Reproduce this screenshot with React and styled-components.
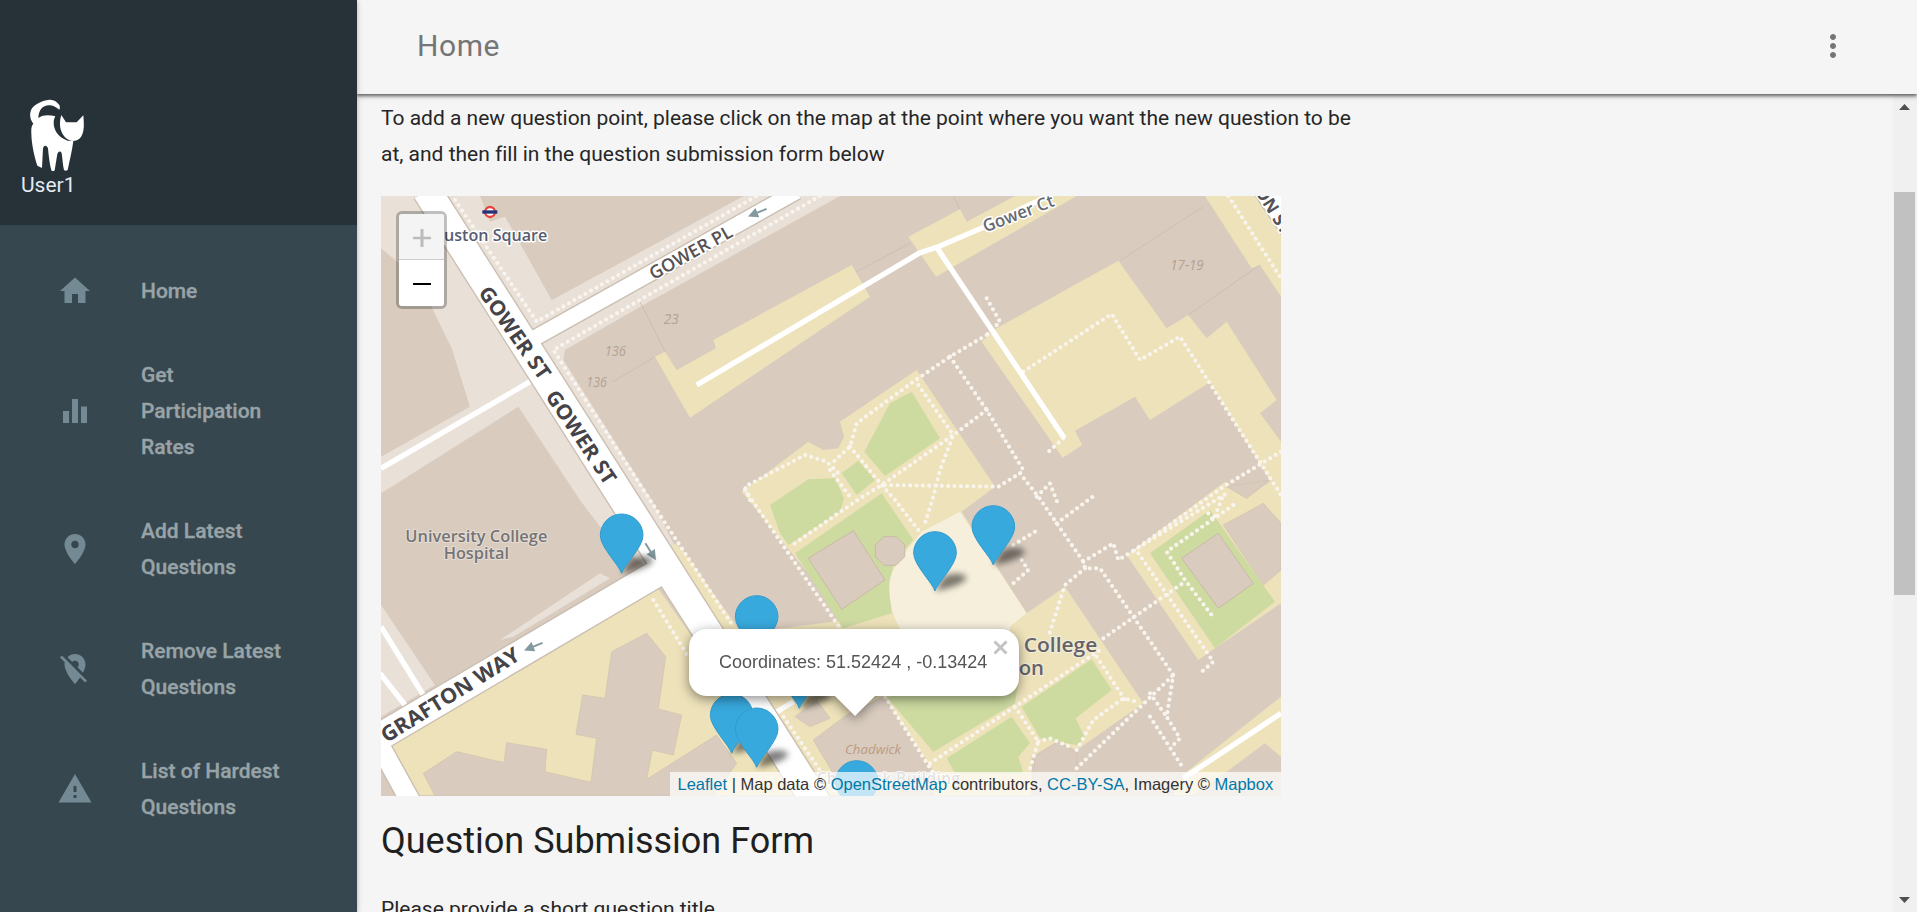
import React from "react";
import styled, { createGlobalStyle } from "styled-components";

const GlobalStyle = createGlobalStyle`
  html, body { margin: 0; height: 100%; overflow: hidden; }
  body { font-family: Roboto, "Liberation Sans", sans-serif; font-size: 21px; line-height: 36px; background: #f5f5f5; }
  * { box-sizing: border-box; }
`;

const Layout = styled.div`
  display: flex;
  width: 100%;
  height: 912px;
  overflow: hidden;
  background: #f5f5f5;
`;

const Drawer = styled.aside`
  flex: 0 0 357px;
  height: 100%;
  background: #37474f;
  box-shadow: 0 3px 3px rgba(0, 0, 0, 0.1), 0 1px 6px rgba(0, 0, 0, 0.22);
  z-index: 5;
`;

const DrawerHeader = styled.header`
  display: flex;
  flex-direction: column;
  justify-content: flex-end;
  height: 225px;
  padding: 0 21px 21px;
  background: #263238;
`;

const Avatar = styled.svg`
  width: 54px;
  height: 72px;
  margin-left: 9px;
  fill: #fff;
`;

const UserName = styled.span`
  margin-top: -4px;
  line-height: 37px;
  font-size: 21px;
  color: #e3eaf2;
`;

const Nav = styled.nav`
  display: flex;
  flex-direction: column;
  padding-top: 24px;
`;

const NavItem = styled.a`
  display: flex;
  align-items: center;
  gap: 48px;
  padding: 24px 57px;
  color: #98a3a7;
  font-weight: 500;
`;

const Glyph = styled.svg`
  flex: none;
  width: 36px;
  height: 36px;
  fill: ${(p) => p.$color || "#738994"};
`;

const NavLabel = styled.span`
  white-space: pre-line;
  font-size: 21px;
  -webkit-text-stroke: 0.35px currentColor;
`;

const Main = styled.div`
  flex: 1;
  min-width: 0;
  display: flex;
  flex-direction: column;
`;

const TopBar = styled.header`
  flex: 0 0 94px;
  display: flex;
  align-items: center;
  justify-content: space-between;
  padding: 0 66px 2px 60px;
  background: #f5f5f5;
  box-shadow: 0 2px 3px rgba(0, 0, 0, 0.5), 0 2px 6px rgba(0, 0, 0, 0.2);
  z-index: 3;
`;

const PageTitle = styled.span`
  font-size: 30px;
  letter-spacing: 0.6px;
  color: #757575;
`;

const Body = styled.div`
  flex: 1;
  min-height: 0;
  display: flex;
`;

const Content = styled.main`
  flex: 1;
  min-width: 0;
  overflow: hidden;
  padding: 6px 24px 0;
  color: #262626;
`;

const Paragraph = styled.p`
  margin: 0;
  width: 1000px;
  white-space: pre-line;
  letter-spacing: -0.01px;
`;

const Heading = styled.h4`
  margin: 21px 0 25.5px;
  font-size: 36px;
  line-height: 48px;
  font-weight: 400;
  color: #1f1f1f;
`;

const ScrollTrack = styled.div`
  flex: 0 0 24px;
  display: flex;
  flex-direction: column;
  align-items: center;
  justify-content: space-between;
  padding: 10px 1px 9px 0;
  background: #f0f0f0;
`;

const ScrollThumb = styled.div`
  width: 21px;
  height: 403px;
  margin: 82px 0 auto;
  background: #c1c1c1;
`;

const Arrow = styled.svg`
  width: 11px;
  height: 6px;
  fill: #505050;
`;

const MapFrame = styled.section`
  position: relative;
  width: 900px;
  height: 600px;
  margin-top: 24px;
  overflow: hidden;
  font-family: "Liberation Sans", Arial, sans-serif;
`;

const MapCanvas = styled.svg`
  display: block;
  width: 900px;
  height: 600px;
  font-family: "Open Sans", "Noto Sans", sans-serif;
`;

const ZoomControl = styled.div`
  position: absolute;
  left: 15px;
  top: 15px;
  width: 51px;
  border: 3px solid rgba(0, 0, 0, 0.25);
  border-radius: 6px;
  background-clip: padding-box;
`;

const ZoomButton = styled.div`
  display: flex;
  align-items: center;
  justify-content: center;
  height: 46px;
  padding-top: 2px;
  background: ${(p) => (p.$disabled ? "#f4f4f4" : "#fff")};
  border-bottom: ${(p) => (p.$disabled ? "1.5px solid #ccc" : "0")};
  border-radius: ${(p) => (p.$disabled ? "3px 3px 0 0" : "0 0 3px 3px")};
  & svg { width: 18px; height: 18px; fill: ${(p) => (p.$disabled ? "#bbb" : "#000")}; }
`;

const Popup = styled.div`
  position: absolute;
  left: 308px;
  top: 432.5px;
  width: 330px;
  height: 67px;
  filter: drop-shadow(0 3px 6px rgba(0, 0, 0, 0.45));
`;

const PopupBody = styled.div`
  display: flex;
  align-items: center;
  height: 100%;
  padding: 0 30px;
  border-radius: 18px;
  background: #fff;
  color: #555;
  font-size: 18px;
  line-height: 26px;
  white-space: nowrap;
`;

const PopupTip = styled.svg`
  position: absolute;
  left: 145px;
  top: 66px;
  width: 42px;
  height: 21px;
  fill: #fff;
`;

const PopupClose = styled.svg`
  position: absolute;
  right: 11px;
  top: 11px;
  width: 15px;
  height: 15px;
  stroke: #c3c3c3;
  stroke-width: 3;
`;

const Attribution = styled.div`
  position: absolute;
  right: 0;
  bottom: 0;
  height: 24px;
  width: 611px;
  padding: 0 7.5px;
  background: rgba(255, 255, 255, 0.7);
  font-size: 16.5px;
  line-height: 24px;
  color: #333;
  white-space: nowrap;
  & a { color: #0078a8; }
`;

const PATHS = {
  home: "M10 20v-6h4v6h5v-8h3L12 3 2 12h3v8z",
  bars: "M10 20h4V4h-4v16zm-6 0h4v-8H4v8zM16 9v11h4V9h-4z",
  place:
    "M12 2C8.13 2 5 5.13 5 9c0 5.25 7 13 7 13s7-7.75 7-13c0-3.87-3.13-7-7-7zm0 9.5c-1.38 0-2.5-1.12-2.5-2.5s1.12-2.5 2.5-2.5 2.5 1.12 2.5 2.5-1.12 2.5-2.5 2.5z",
  placeOff:
    "M12 6.5c1.38 0 2.5 1.12 2.5 2.5 0 .74-.33 1.39-.83 1.85l3.63 3.63c.98-1.86 1.7-3.8 1.7-5.48 0-3.87-3.13-7-7-7-1.98 0-3.76.83-5.04 2.15l3.19 3.19c.46-.52 1.11-.84 1.85-.84zm4.37 9.6l-4.63-4.63-.11-.11L3.27 3 2 4.27l3.18 3.18C5.07 7.95 5 8.47 5 9c0 5.25 7 13 7 13s1.67-1.85 3.38-4.35L18.73 21 20 19.73l-3.63-3.63z",
  warning: "M1 21h22L12 2 1 21zm12-3h-2v-2h2v2zm0-4h-2v-4h2v4z",
  more: "M12 8c1.1 0 2-.9 2-2s-.9-2-2-2-2 .9-2 2 .9 2 2 2zm0 2c-1.1 0-2 .9-2 2s.9 2 2 2 2-.9 2-2-.9-2-2-2zm0 6c-1.1 0-2 .9-2 2s.9 2 2 2 2-.9 2-2-.9-2-2-2z",
};

const NAV_ITEMS = [
  { icon: "home", label: "Home" },
  { icon: "bars", label: "Get\nParticipation\nRates" },
  { icon: "place", label: "Add Latest\nQuestions" },
  { icon: "placeOff", label: "Remove Latest\nQuestions" },
  { icon: "warning", label: "List of Hardest\nQuestions" },
];

// Map geometry, in thirds of a pixel.
const LIGHT = [
  "3,18 420,18 515,330 1090,18 1380,18 790,345 555,480 550,510 815,930 880,1060 800,1130 690,1050 600,930 415,650 3,910 3,800 270,650 215,475 140,320 60,222 3,175",
  "3,1245 165,1485 3,1580",
  "660,1150 690,1165 400,1340 360,1350",
];
const BUILDING_OVER_LIGHT = ["300,18 330,95 375,80 515,330 1090,18"];
const YELLOW = [
  "22,1675 835,1197 1270,1815 115,1815",
  "880,1060 905,1075 1085,1330 1400,1290 1085,905 1285,755 1330,780 1375,775 1392,740 1380,695 1610,540 1845,890 1745,965 1940,1270 2055,1190 2290,1540 2090,1680 2030,1655 1955,1700 1955,1815 1340,1815 860,1080",
  "825,500 855,485 890,540 1008,475 1000,450 1415,225 1470,320 930,683",
  "1585,140 1740,58 1760,95 1905,18 2090,18 1668,260",
  "1850,415 2215,212 2360,415 2425,375 2480,445 2540,395 2690,630 2640,670 2703,755 2703,925 2490,577 2310,690 2265,620 2085,722 2107,765 2048,803 1805,455",
  "2475,18 2640,18 2703,110 2703,320 2640,225 2615,235",
  "2240,1095 2535,875 2600,925 2703,850 2703,1240 2505,1375 2455,1410",
  "2380,1815 2420,1745 2703,1520 2703,1700 2655,1660 2540,1745 2440,1815",
];
const BUILDINGS = [
  "165,1818 130,1750 230,1685 372,1718 380,1658 500,1678 495,1745 633,1777 650,1645 588,1633 608,1515 675,1525 695,1385 800,1330 857,1400 835,1557 905,1575 880,1695 817,1680 800,1768 1010,1635 1070,1720 1000,1818",
  "1245,1580 1310,1530 1350,1585 1290,1610",
  "1300,1650 1400,1575 1510,1520 1660,1745 1660,1818 1400,1818",
  "1965,1700 2035,1655 2090,1690 2090,1818 1955,1818",
  "2530,1005 2650,940 2703,1000 2703,1140 2650,1185",
  "2540,890 2665,870 2600,925",
];
const CREAM = "M1740 965L1940 1270L1895 1305L1880 1340L1570 1340L1552 1300C1530 1260 1525 1200 1530 1170C1535 1130 1580 1080 1625 1025Z";
const GREEN = [
  "1530,640 1595,605 1680,745 1515,858 1453,785",
  "1385,850 1435,812 1485,870 1430,915",
  "1170,945 1285,868 1365,865 1392,925 1380,965 1225,1065 1200,1030",
  "1245,1090 1505,910 1600,1050 1545,1110 1528,1180 1535,1270 1390,1315",
  "2310,1090 2490,960 2685,1235 2505,1375",
  "1520,1520 1915,1480 1905,1540 1660,1685",
  "1925,1550 2135,1408 2195,1500 2087,1585 2115,1645 2090,1665 1980,1645",
  "1700,1705 1895,1580 1950,1660 1915,1700 1930,1750 1725,1750",
];
const OUTLINED = [
  "1285,1105 1420,1022 1515,1170 1385,1258",
  "1512,1040 1548,1040 1574,1064 1574,1100 1548,1126 1512,1126 1486,1100 1486,1064",
  "2405,1105 2515,1030 2620,1180 2515,1255",
];
const BOUNDARIES = [
  "780,335 855,485", "700,575 825,500", "2220,212 2470,50", "2425,375 2640,225",
  "1720,18 1740,58", "1430,245 1590,160",
];
const FOOTPATHS = [
  "225,30 470,395 1130,18",
  "1320,18 520,480 810,930 1060,1310",
  "1200,1565 1370,1815",
  "820,1230 925,1400",
  "1110,930 1095,890 1275,795 1340,815 1375,850",
  "1095,900 1370,1300 1500,1500",
  "1820,435 1710,500 1600,575 1430,700 1410,770 1350,825",
  "1410,770 1505,885 1545,930 1615,1020",
  "1710,500 1820,660 1930,840 1920,850 1855,890 1505,885",
  "1920,850 1975,920 2110,1115 2115,1135 2160,1135 2380,1455 2360,1580 2400,1645 2370,1675",
  "1615,585 1720,735 1505,885 1440,925 1230,1070",
  "1820,660 1720,735 1680,840 1660,920 1635,1000",
  "1350,840 1410,920",
  "1820,325 1860,395 1820,435",
  "1930,545 2195,372 2280,510 2400,440 2703,915",
  "2050,745 1995,795", "2703,785 2530,890 2250,1090",
  "2545,18 2703,265",
  "2110,1115 2200,1060 2215,1110 2540,910",
  "2115,1135 2055,1185 2005,1340",
  "2030,1000 2145,915", "1970,920 2010,880 2035,945",
  "1900,1065 1965,1025", "1925,1110 1945,1140 1900,1180",
  "2170,1345 2415,1175", "2275,1090 2500,1415 2460,1450",
  "2560,945 2360,1085 2415,1170 2495,1275",
  "2485,970 2500,990 2530,915",
  "2090,1735 2380,1455", "2150,1400 2235,1530",
  "2090,1680 2140,1590 2230,1525 2270,1535",
  "1650,1720 1905,1550 2160,1380",
  "1905,1550 1975,1655 1950,1735",
  "1975,1655 2010,1645 2080,1675",
  "1515,1520 1660,1750",
  "2310,1510 2360,1580", "2310,1580 2410,1735",
];
const SERVICE = [
  "3,835 450,575",
  "950,585 1620,188 1670,172 1810,112 2020,10",
  "1670,172 2053,745",
  "2410,1765 2703,1570",
  "3,1310 130,1515",
  "0,1450 75,1545",
  "1190,1565 1240,1535",
];
const ROADS = [
  { d: "140,2 1315,1847", w: 85 },
  { d: "450,452 1250,4", w: 46 },
  { d: "-60,1675 870,1127", w: 80 },
  { d: "-10,1650 95,1840", w: 58 },
  { d: "2640,-30 2760,150", w: 72 },
];
const MARKERS = [
  [725, 1150], [1840, 1125], [1665, 1203], [1130, 1395], [1258, 1555], [1055, 1690], [1130, 1732], [1430, 1890],
];
const ARROWS = [
  [1132, 68, 158], [460, 1370, 158], [812, 1085, 58],
];
const STREET_NAMES = [
  { x: 405, y: 428, a: 55, w: 325, s: 62, t: "GOWER ST", weight: 700, c: "#454347" },
  { x: 604, y: 741, a: 56, w: 325, s: 62, t: "GOWER ST", weight: 700, c: "#454347" },
  { x: 932, y: 187, a: -29, w: 276, s: 54, t: "GOWER PL", weight: 600, c: "#555154" },
  { x: 210, y: 1514, a: -32, w: 478, s: 63, t: "GRAFTON WAY", weight: 700, c: "#454347" },
  { x: 1915, y: 70, a: -21, w: 225, s: 52, t: "Gower Ct", weight: 600, c: "#666a72" },
  { x: 2681, y: 60, a: 58, s: 52, t: "ON ST", weight: 700, c: "#555154" },
];

const Polys = ({ list, ...rest }) => list.map((points) => <polygon key={points} points={points} {...rest} />);
const Lines = ({ list, ...rest }) => list.map((points) => <polyline key={points} points={points} fill="none" {...rest} />);

function CampusMap() {
  const halo = { stroke: "#fff", strokeWidth: 9, strokeLinejoin: "round", paintOrder: "stroke" };
  return (
    <MapCanvas viewBox="3 18 2700 1800">
      <defs>
        <filter id="soft" x="-50%" y="-80%" width="200%" height="260%">
          <feGaussianBlur stdDeviation="9" />
        </filter>
      </defs>
      <rect x="3" y="18" width="2700" height="1800" fill="#d9ccbf" />
      <Polys list={LIGHT} fill="#e9e0d8" />
      <Polys list={BUILDING_OVER_LIGHT} fill="#d9ccbf" />
      <Polys list={YELLOW} fill="#ede2ba" />
      <Polys list={BUILDINGS} fill="#d9ccbf" stroke="#d1c0ad" strokeWidth="2" />
      <Polys list={GREEN} fill="#cddba1" />
      <path d={CREAM} fill="#f6efdc" />
      <Polys list={OUTLINED} fill="#d9ccbf" stroke="#cbb9a6" strokeWidth="3" />
      <Lines list={BOUNDARIES} stroke="#cdbfb0" strokeWidth="3" />
      <Lines list={FOOTPATHS} stroke="#f9f5ee" strokeWidth="12.5" strokeLinecap="round" strokeLinejoin="round" strokeDasharray="0 19" />
      <Lines list={SERVICE} stroke="#fff" strokeWidth="16" strokeLinejoin="round" />
      {ROADS.map((r) => <polyline key={r.d} points={r.d} fill="none" stroke="#c9beb0" strokeWidth={r.w + 8} />)}
      {ROADS.map((r) => <polyline key={r.d} points={r.d} fill="none" stroke="#fff" strokeWidth={r.w} />)}
      {ARROWS.map(([x, y, a]) => (
        <g key={x} transform={`translate(${x} ${y}) rotate(${a})`}>
          <path d="M-30 0H8" stroke="#83989f" strokeWidth="6" />
          <path d="M0-15L30 0L0 15Z" fill="#83989f" />
        </g>
      ))}
      <circle cx="330" cy="66" r="15" fill="#fff" stroke="#e8423f" strokeWidth="7" />
      <rect x="307" y="61" width="45" height="10" fill="#23347a" />
      {STREET_NAMES.map((n) => (
        <text key={n.t + n.x} transform={`translate(${n.x} ${n.y}) rotate(${n.a})`} y={n.s * 0.36} textAnchor="middle"
          fontSize={n.s} fontWeight={n.weight} fill={n.c} textLength={n.w} lengthAdjust="spacingAndGlyphs" {...halo}>{n.t}</text>
      ))}
      <text x="502" y="153" textAnchor="end" fontSize="49" fontWeight="600" fill="#575c70" textLength="337" lengthAdjust="spacingAndGlyphs" {...halo}>Euston Square</text>
      <g fontWeight="600" fill="#747476" fontSize="49" textAnchor="middle" {...halo} stroke="#e6ddd4" strokeWidth="6">
        <text x="289" y="1056" textLength="426" lengthAdjust="spacingAndGlyphs">University College</text>
        <text x="289" y="1106" textLength="196" lengthAdjust="spacingAndGlyphs">Hospital</text>
      </g>
      <g fontWeight="600" fill="#656368" fontSize="61" textAnchor="end" {...halo} stroke="#f3ecd8" strokeWidth="7">
        <text x="2152" y="1387" wordSpacing="14" textLength="560" lengthAdjust="spacingAndGlyphs">University College</text>
        <text x="1992" y="1455">London</text>
      </g>
      <g fontStyle="italic" fill="#b3a192" fontSize="42">
        <text x="851" y="403" textLength="45" lengthAdjust="spacingAndGlyphs">23</text>
        <text x="674" y="498" textLength="64" lengthAdjust="spacingAndGlyphs">136</text>
        <text x="619" y="592" textLength="62" lengthAdjust="spacingAndGlyphs">136</text>
        <text x="2371" y="240" textLength="100" lengthAdjust="spacingAndGlyphs">17-19</text>
        <text x="1395" y="1691" fontSize="39" fill="#bb9b83" textLength="168" lengthAdjust="spacingAndGlyphs">Chadwick</text>
      </g>
      <text x="1310" y="1782" fontSize="46" fontWeight="600" fill="#a09a9b" textLength="430" {...halo} strokeWidth="5">Chadwick Building</text>
      {MARKERS.map(([x, y]) => (
        <g key={`${x}-${y}`} transform={`translate(${x} ${y})`}>
          <path d="M0 0L25-42C50-58 98-52 94-38C85-20 40-6 0 0Z" fill="#000" opacity="0.5" filter="url(#soft)" />
          <path d="M0 0C-7-24-64-78-64-114A64 64 0 0 1 64-114C64-78 7-24 0 0Z" fill="#38a9dd" stroke="#319cd0" strokeWidth="3" />
        </g>
      ))}
    </MapCanvas>
  );
}

export default function App() {
  return (
    <Layout>
      <GlobalStyle />
      <Drawer>
        <DrawerHeader>
          <Avatar viewBox="30 27 162 216">
            <path d="M40 101C28 86 28 68 36 55C46 42 66 31 88 29C102 28 111 35 118 45C121 51 119 56 118 59C108 51 98 45 84 46C66 48 56 62 55 84C70 73 90 75 106 79C96 96 98 136 143 152L160 153C156 185 149 210 143 240Q137 245 132 240C128 225 128 208 125 190C122 182 115 182 112 192L104 241Q98 246 94 241C90 225 86 200 84 175C80 165 72 165 69 175L66 234L52 227C44 205 34 160 34 130C33 115 35 106 40 101Z" />
            <path d="M124 75L138 97L170 97L190 76C192 100 193 120 186 135C178 153 160 156 147 150C122 138 114 106 124 75Z" />
          </Avatar>
          <UserName>User1</UserName>
        </DrawerHeader>
        <Nav>
          {NAV_ITEMS.map((item) => (
            <NavItem key={item.icon}>
              <Glyph viewBox="0 0 24 24"><path d={PATHS[item.icon]} /></Glyph>
              <NavLabel>{item.label}</NavLabel>
            </NavItem>
          ))}
        </Nav>
      </Drawer>
      <Main>
        <TopBar>
          <PageTitle>Home</PageTitle>
          <Glyph viewBox="0 0 24 24" $color="#757575"><path d={PATHS.more} /></Glyph>
        </TopBar>
        <Body>
          <Content>
            <Paragraph>{"To add a new question point, please click on the map at the point where you want the new question to be\nat, and then fill in the question submission form below"}</Paragraph>
            <MapFrame>
              <CampusMap />
              <ZoomControl>
                <ZoomButton $disabled><svg viewBox="0 0 18 18"><path d="M7.5 0h3v7.8H18v2.4h-7.5V18h-3v-7.8H0V7.8h7.5z" /></svg></ZoomButton>
                <ZoomButton><svg viewBox="0 0 18 18"><path d="M0 8h18v2H0z" /></svg></ZoomButton>
              </ZoomControl>
              <Popup>
                <PopupBody>Coordinates: 51.52424 , -0.13424</PopupBody>
                <PopupTip viewBox="0 0 42 21"><path d="M0 0H42L21 21Z" /></PopupTip>
                <PopupClose viewBox="0 0 15 15"><path d="M1.5 1.5L13.5 13.5M13.5 1.5L1.5 13.5" /></PopupClose>
              </Popup>
              <Attribution>
                <a>Leaflet</a> | Map data © <a>OpenStreetMap</a> contributors, <a>CC-BY-SA</a>, Imagery © <a>Mapbox</a>
              </Attribution>
            </MapFrame>
            <Heading>Question Submission Form</Heading>
            <Paragraph>Please provide a short question title</Paragraph>
          </Content>
          <ScrollTrack>
            <Arrow viewBox="0 0 11 6"><path d="M0 6L5.5 0L11 6Z" /></Arrow>
            <ScrollThumb />
            <Arrow viewBox="0 0 11 6"><path d="M0 0L5.5 6L11 0Z" /></Arrow>
          </ScrollTrack>
        </Body>
      </Main>
    </Layout>
  );
}
